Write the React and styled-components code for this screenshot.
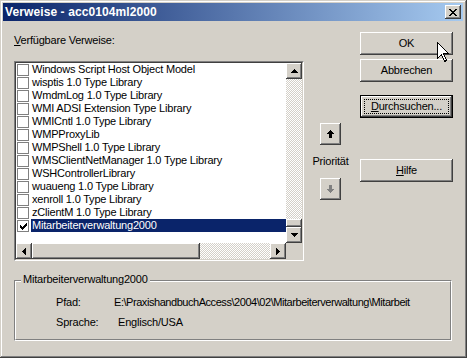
import styled, { createGlobalStyle } from "styled-components";

const GlobalStyle = createGlobalStyle`
  html, body {
    margin: 0;
    padding: 0;
    background: #d4d0c8;
  }
`;

// pixel glyphs, drawn like the classic 1bpp bitmaps
const UP_SMALL = ["...#...", "..###..", ".#####.", "#######"];
const DOWN_SMALL = [...UP_SMALL].reverse();
const LEFT_SMALL = ["...#", "..##", ".###", "####", ".###", "..##", "...#"];
const RIGHT_SMALL = LEFT_SMALL.map((r) => [...r].reverse().join(""));
const PRIO_UP = ["...#...", "..###..", ".#####.", "#######", "..###..", "..###..", "..###..", "..###.."];
const PRIO_DOWN = [...PRIO_UP].reverse();
const CLOSE_X = ["##....##", ".##..##.", "..####..", "...##...", "..####..", ".##..##.", "##....##"];
const CHECK = ["......#", ".....##", "#...###", "##.###.", "#####..", ".###...", "..#...."];

const items = [
  "Windows Script Host Object Model",
  "wisptis 1.0 Type Library",
  "WmdmLog 1.0 Type Library",
  "WMI ADSI Extension Type Library",
  "WMICntl 1.0 Type Library",
  "WMPProxyLib",
  "WMPShell 1.0 Type Library",
  "WMSClientNetManager 1.0 Type Library",
  "WSHControllerLibrary",
  "wuaueng 1.0 Type Library",
  "xenroll 1.0 Type Library",
  "zClientM 1.0 Type Library",
];

function Pixels({ rows, color = "#000" }) {
  const w = rows[0].length;
  const h = rows.length;
  const d = rows
    .flatMap((r, y) => [...r].map((c, x) => (c === "#" ? `M${x} ${y}h1v1h-1z` : "")))
    .join("");
  return (
    <svg width={w} height={h} viewBox={`0 0 ${w} ${h}`} shapeRendering="crispEdges">
      <path d={d} fill={color} />
    </svg>
  );
}

export default function App() {
  return (
    <>
      <GlobalStyle />
      <Window>
        <TitleBar>
          <Title>Verweise - acc0104ml2000</Title>
          <CloseButton>
            <Pixels rows={CLOSE_X} />
          </CloseButton>
        </TitleBar>

        <Body>
          <TopRow>
            <ListColumn>
              <Label>
                <u>V</u>erfügbare Verweise:
              </Label>
              <ListFrame>
                <ListInner>
                  <Rows>
                    {items.map((name) => (
                      <Row key={name}>
                        <Check />
                        <ItemText>{name}</ItemText>
                      </Row>
                    ))}
                    <Row>
                      <Check>
                        <Pixels rows={CHECK} />
                      </Check>
                      <ItemText $selected>Mitarbeiterverwaltung2000</ItemText>
                    </Row>
                  </Rows>
                  <VScroll>
                    <ScrollButton>
                      <Pixels rows={UP_SMALL} />
                    </ScrollButton>
                    <Track />
                    <Thumb $size={8} />
                    <ScrollButton>
                      <Pixels rows={DOWN_SMALL} />
                    </ScrollButton>
                  </VScroll>
                  <HScroll>
                    <ScrollButton>
                      <Pixels rows={LEFT_SMALL} />
                    </ScrollButton>
                    <Thumb $size={168} />
                    <Track />
                    <ScrollButton>
                      <Pixels rows={RIGHT_SMALL} />
                    </ScrollButton>
                  </HScroll>
                  <Corner />
                </ListInner>
              </ListFrame>
            </ListColumn>

            <PriorityColumn>
              <PrioButton>
                <Pixels rows={PRIO_UP} />
              </PrioButton>
              <PrioLabel>Priorität</PrioLabel>
              <PrioButton>
                <Pixels rows={PRIO_DOWN} color="#808080" />
              </PrioButton>
            </PriorityColumn>

            <ButtonColumn>
              <Button>OK</Button>
              <Button $gap={4}>Abbrechen</Button>
              <Button $gap={13} $default>
                <u>D</u>urchsuchen...
              </Button>
              <Button $gap={41}>
                <u>H</u>ilfe
              </Button>
            </ButtonColumn>
          </TopRow>

          <GroupOuter>
            <Legend>Mitarbeiterverwaltung2000</Legend>
            <GroupInner>
              <InfoGrid>
                <span>Pfad:</span>
                <InfoValue $tight>E:\PraxishandbuchAccess\2004\02\Mitarbeiterverwaltung\Mitarbeit</InfoValue>
                <span>Sprache:</span>
                <InfoValue $shift={4}>Englisch/USA</InfoValue>
              </InfoGrid>
            </GroupInner>
          </GroupOuter>
        </Body>

        <Cursor width="13" height="21" viewBox="0 0 13 21">
          <path
            d="M0.5 0.5V16.5L4.5 12.5L7.5 19.5L9.5 18.5L6.5 11.5H11.5Z"
            fill="#fff"
            stroke="#000"
            strokeWidth="1"
            shapeRendering="crispEdges"
          />
        </Cursor>
      </Window>
    </>
  );
}

const bevel = `
  box-shadow: inset -1px -1px #404040, inset 1px 1px #ffffff,
    inset -2px -2px #808080, inset 2px 2px #d4d0c8;
`;

const Window = styled.div`
  position: relative;
  box-sizing: border-box;
  width: 467px;
  height: 358px;
  padding: 3px 4px 2px 3px;
  display: flex;
  flex-direction: column;
  background: #d4d0c8;
  box-shadow: inset -1px -1px #404040, inset 1px 1px #d4d0c8,
    inset -2px -2px #808080, inset 2px 2px #ffffff;
  font-family: "Liberation Sans", Arial, sans-serif;
  font-size: 11px;
  line-height: 13px;
  letter-spacing: -0.2px;
  color: #000;
`;

const TitleBar = styled.div`
  flex: none;
  height: 18px;
  display: flex;
  align-items: center;
  justify-content: space-between;
  padding: 0 2px;
  background: linear-gradient(to right, #0a246a, #a6caf0);
`;

const Title = styled.span`
  color: #fff;
  font-weight: bold;
  font-size: 12px;
  letter-spacing: 0.1px;
`;

const CloseButton = styled.div`
  width: 16px;
  height: 14px;
  display: flex;
  align-items: center;
  justify-content: center;
  background: #d4d0c8;
  ${bevel}

  & > svg {
    margin-left: -1px;
  }
`;

const Body = styled.div`
  flex: 1;
  display: flex;
  flex-direction: column;
  padding: 11px 10px 0 11px;
`;

const TopRow = styled.div`
  display: flex;
  align-items: flex-start;
`;

// Section list
const ListColumn = styled.div`
  width: 290px;
  padding-top: 2px;
`;

const Label = styled.div`
  margin-bottom: 14px;
  white-space: nowrap;
`;

const ListFrame = styled.div`
  box-sizing: border-box;
  width: 290px;
  height: 200px;
  border: 1px solid;
  border-color: #808080 #ffffff #ffffff #808080;
`;

const ListInner = styled.div`
  box-sizing: border-box;
  height: 100%;
  border: 1px solid;
  border-color: #404040 #d4d0c8 #d4d0c8 #404040;
  background: #fff;
  display: grid;
  grid-template-columns: 1fr 16px;
  grid-template-rows: 1fr 16px;
`;

const Rows = styled.div`
  overflow: hidden;
`;

const Row = styled.div`
  height: 13px;
  display: flex;
  align-items: flex-start;
`;

const Check = styled.div`
  box-sizing: border-box;
  width: 12px;
  height: 12px;
  margin: 1px 0 0 1px;
  border: 1px solid #808080;
  background: #fff;
  display: flex;
  align-items: center;
  justify-content: center;
`;

const ItemText = styled.div`
  flex: 1;
  margin-left: 2px;
  padding-left: 1px;
  white-space: nowrap;
  overflow: hidden;
  background: ${({ $selected }) => ($selected ? "#0a246a" : "transparent")};
  color: ${({ $selected }) => ($selected ? "#fff" : "#000")};
`;

const VScroll = styled.div`
  display: flex;
  flex-direction: column;
`;

const HScroll = styled.div`
  display: flex;
`;

const ScrollButton = styled.div`
  flex: none;
  width: 16px;
  height: 16px;
  display: flex;
  align-items: center;
  justify-content: center;
  background: #d4d0c8;
  ${bevel}
`;

const Track = styled.div`
  flex: 1;
  background: repeating-conic-gradient(#ffffff 0 25%, #d4d0c8 0 50%) 0 0 / 2px 2px;
`;

const Thumb = styled.div`
  flex: 0 0 ${({ $size }) => $size}px;
  background: #d4d0c8;
  ${bevel}
`;

const Corner = styled.div`
  background: #d4d0c8;
`;

// Section priority
const PriorityColumn = styled.div`
  width: 37px;
  margin-left: 8px;
  padding-top: 91px;
  display: flex;
  flex-direction: column;
  align-items: center;
`;

const PrioButton = styled.div`
  width: 21px;
  height: 22px;
  display: flex;
  align-items: center;
  justify-content: center;
  background: #d4d0c8;
  ${bevel}
`;

const PrioLabel = styled.div`
  margin: 10px 0;
  white-space: nowrap;
`;

// Section buttons
const ButtonColumn = styled.div`
  width: 93px;
  margin-left: 11px;
  display: flex;
  flex-direction: column;
`;

const Button = styled.div`
  position: relative;
  height: 23px;
  margin-top: ${({ $gap }) => $gap || 0}px;
  display: flex;
  align-items: center;
  justify-content: center;
  background: #d4d0c8;
  ${({ $default }) =>
    $default
      ? `box-shadow: inset 0 0 0 1px #000, inset -2px -2px #404040,
          inset 2px 2px #ffffff, inset -3px -3px #808080;`
      : bevel}

  &::after {
    content: "";
    display: ${({ $default }) => ($default ? "block" : "none")};
    position: absolute;
    inset: 4px;
    border: 1px dotted #000;
  }
`;

// Section details
const GroupOuter = styled.div`
  position: relative;
  box-sizing: border-box;
  width: 438px;
  height: 61px;
  margin-top: 19px;
  border: 1px solid;
  border-color: #808080 #ffffff #ffffff #808080;
`;

const GroupInner = styled.div`
  box-sizing: border-box;
  height: 100%;
  border: 1px solid;
  border-color: #ffffff #808080 #808080 #ffffff;
  padding: 14px 0 0 40px;
`;

const Legend = styled.div`
  position: absolute;
  top: -8px;
  left: 6px;
  padding: 0 2px;
  background: #d4d0c8;
  white-space: nowrap;
`;

const InfoGrid = styled.div`
  display: grid;
  grid-template-columns: 58px 1fr;
  row-gap: 7px;
  white-space: nowrap;
`;

const InfoValue = styled.span`
  padding-left: ${({ $shift }) => $shift || 0}px;
  letter-spacing: ${({ $tight }) => ($tight ? "-0.45px" : "inherit")};
`;

const Cursor = styled.svg`
  position: absolute;
  left: 437px;
  top: 42px;
`;
